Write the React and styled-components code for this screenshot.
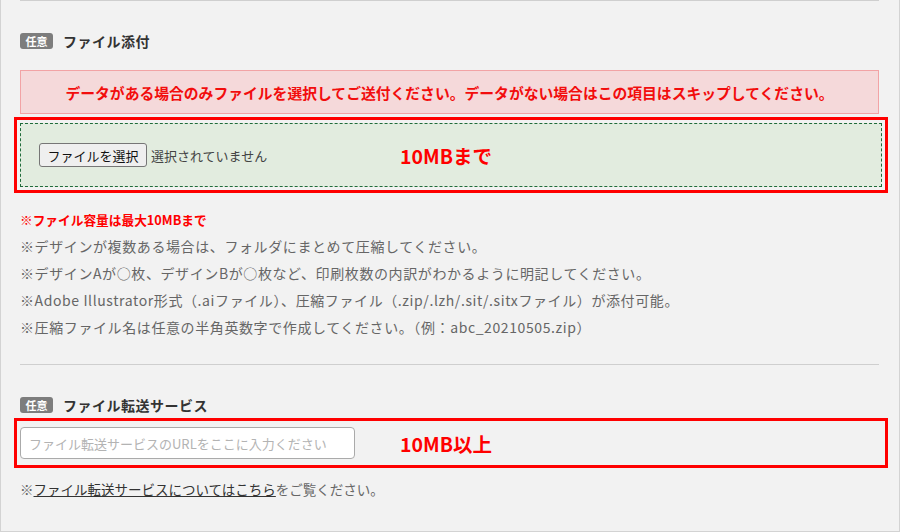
import React from "react";
import styled, { createGlobalStyle } from "styled-components";

const GlobalStyle = createGlobalStyle`
  html, body {
    margin: 0;
    padding: 0;
    background: #f2f2f2;
  }
  body {
    font-family: "Noto Sans CJK JP", "Noto Sans", sans-serif;
  }
`;

const App = () => {
  return (
    <>
      <GlobalStyle />
      <Page>
        <Rule />
        <FieldHeader>
          <Badge>任意</Badge>
          <FieldTitle>ファイル添付</FieldTitle>
        </FieldHeader>
        <Alert>
          データがある場合のみファイルを選択してご送付ください。データがない場合はこの項目はスキップしてください。
        </Alert>
        <Highlight pad="3px">
          <DropZone>
            <FileButton type="button">ファイルを選択</FileButton>
            <FileStatus>選択されていません</FileStatus>
            <SizeLabel>10MBまで</SizeLabel>
          </DropZone>
        </Highlight>
        <Notes>
          <Note warn>※ファイル容量は最大10MBまで</Note>
          <Note>※デザインが複数ある場合は、フォルダにまとめて圧縮してください。</Note>
          <Note>※デザインAが○枚、デザインBが○枚など、印刷枚数の内訳がわかるように明記してください。</Note>
          <Note>※Adobe Illustrator形式（.aiファイル）、圧縮ファイル（.zip/.lzh/.sit/.sitxファイル）が添付可能。</Note>
          <Note>※圧縮ファイル名は任意の半角英数字で作成してください。（例：abc_20210505.zip）</Note>
        </Notes>
        <Rule gap="23px" />
        <FieldHeader>
          <Badge>任意</Badge>
          <FieldTitle>ファイル転送サービス</FieldTitle>
        </FieldHeader>
        <Highlight pad="6px 3px">
          <UrlRow>
            <UrlInput placeholder="ファイル転送サービスのURLをここに入力ください" />
            <SizeLabel>10MB以上</SizeLabel>
          </UrlRow>
        </Highlight>
        <Footnote>
          ※<FootLink href="#">ファイル転送サービスについてはこちら</FootLink>をご覧ください。
        </Footnote>
      </Page>
    </>
  );
};

export default App;

const Page = styled.div`
  box-sizing: border-box;
  width: 900px;
  height: 532px;
  padding: 0 20px 0 19px;
  border: 1px solid #d3d3d3;
  border-top: none;
  overflow: hidden;
`;

const Rule = styled.div`
  height: 1px;
  background: #cfcfcf;
  margin-top: ${(p) => p.gap || "0"};
`;

const FieldHeader = styled.div`
  display: flex;
  align-items: center;
  height: 20px;
  margin-top: 30px;
`;

const Badge = styled.span`
  display: inline-flex;
  align-items: center;
  justify-content: center;
  width: 33px;
  height: 16px;
  border-radius: 3px;
  background: #7d7d7d;
  color: #fff;
  font-size: 11px;
  font-weight: 700;
  line-height: 1;
`;

const FieldTitle = styled.span`
  margin-left: 10px;
  font-size: 14px;
  font-weight: 700;
  color: #333;
  letter-spacing: 0.5px;
`;

const Alert = styled.div`
  box-sizing: border-box;
  height: 44px;
  margin-top: 19px;
  display: flex;
  align-items: center;
  justify-content: center;
  background: #f5d9da;
  border: 1px solid #f2a3a5;
  color: #f20d0d;
  font-size: 14.8px;
  font-weight: 700;
`;

const Highlight = styled.div`
  margin: 3px -9px 0 -6px;
  padding: ${(p) => p.pad};
  border: 3px solid #ff0000;
`;

const DropZone = styled.div`
  box-sizing: border-box;
  height: 64px;
  display: flex;
  align-items: center;
  padding-left: 18px;
  background: #e2ecdf;
  border: 1px dashed #1f6b3a;
`;

const FileButton = styled.button`
  box-sizing: border-box;
  height: 24px;
  width: 108px;
  padding: 0;
  background: #efefef;
  border: 1px solid #767676;
  border-radius: 3px;
  color: #111;
  font-family: inherit;
  font-size: 13px;
`;

const FileStatus = styled.span`
  margin-left: 4px;
  width: 230px;
  font-size: 13px;
  color: #444;
`;

const SizeLabel = styled.span`
  margin-left: 19px;
  font-size: 19.5px;
  font-weight: 700;
  color: #ff0000;
`;

const Notes = styled.div`
  margin-top: 13px;
`;

const Note = styled.p`
  margin: 0;
  line-height: 27px;
  font-size: ${(p) => (p.warn ? "12.7px" : "14px")};
  font-weight: ${(p) => (p.warn ? 700 : 400)};
  color: ${(p) => (p.warn ? "#ff0000" : "#666")};
  letter-spacing: ${(p) => (p.warn ? "0" : "0.6px")};
`;

const UrlRow = styled.div`
  display: flex;
  align-items: center;
`;

const UrlInput = styled.input`
  box-sizing: border-box;
  width: 335px;
  height: 32px;
  padding: 0 8px;
  background: #fff;
  border: 1px solid #aaa;
  border-radius: 4px;
  font-family: inherit;
  font-size: 13px;
  outline: none;
  margin-right: 26px;

  &::placeholder {
    color: #b3b3b3;
  }
`;

const Footnote = styled.p`
  margin: 11px 0 0;
  line-height: 20px;
  font-size: 13.5px;
  color: #666;
`;

const FootLink = styled.a`
  color: #333;
  text-decoration: underline;
`;
